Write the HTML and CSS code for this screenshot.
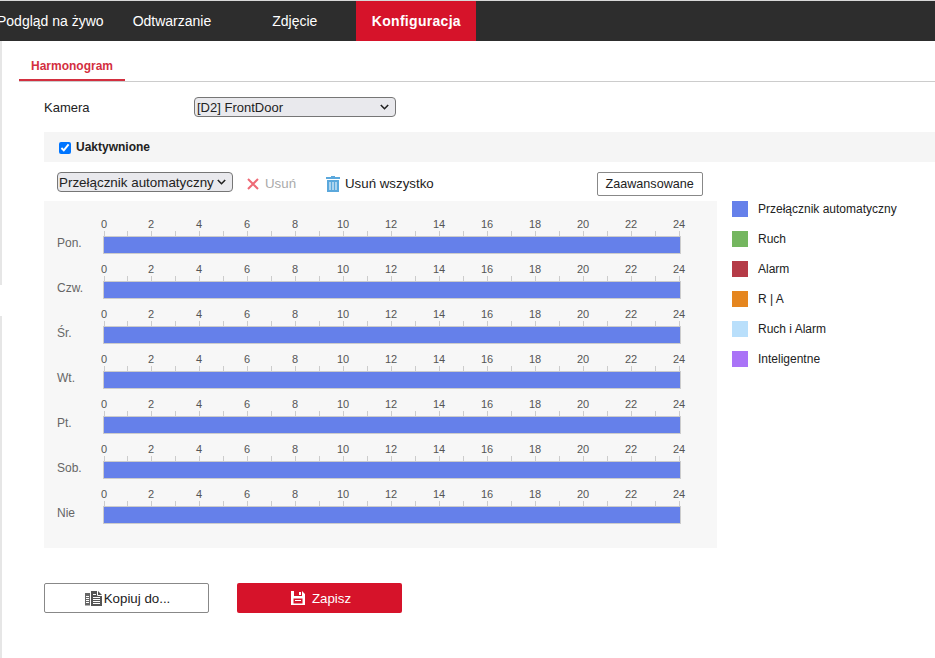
FILE: index.html
```html
<!DOCTYPE html>
<html lang="pl">
<head>
    <meta charset="UTF-8">
    <meta name="viewport" content="width=device-width, initial-scale=1.0">
    <title>Konfiguracja</title>
    <link rel="stylesheet" href="styles.css">
</head>
<body>

<div class="top-nav">
    <a class="nav-item nav-live">Podgląd na żywo</a>
    <a class="nav-item nav-playback">Odtwarzanie</a>
    <a class="nav-item nav-photo">Zdjęcie</a>
    <a class="nav-item nav-config">Konfiguracja</a>
</div>

<div class="page">
    <div class="side-edge">
        <div class="edge-top"></div>
        <div class="edge-bottom"></div>
    </div>

    <div class="content">
        <div class="tabs">
            <span class="tab">Harmonogram</span>
        </div>

        <div class="camera-row">
            <label class="camera-label" for="camera">Kamera</label>
            <select class="camera-select" id="camera">
                <option>[D2] FrontDoor</option>
            </select>
        </div>

        <div class="enable-band">
            <input type="checkbox" id="enabled" checked>
            <label for="enabled">Uaktywnione</label>
        </div>

        <div class="toolbar">
            <select class="type-select">
                <option>Przełącznik automatyczny</option>
            </select>
            <span class="tool tool-remove">
                <svg width="12" height="12" viewBox="0 0 12 12"><path d="M1 1l10 10M11 1L1 11" stroke="#ee6a76" stroke-width="2" fill="none"/></svg>
                Usuń
            </span>
            <span class="tool tool-remove-all">
                <svg width="14" height="16" viewBox="0 0 14 16"><path d="M5 0h4v1h5v2H0V1h5zM1 4h12v12H1zM3.500 6v8h1V6zM6.500 6v8h1V6zM9.500 6v8h1V6z" fill="#5ba8dc" fill-rule="evenodd"/></svg>
                Usuń wszystko
            </span>
            <button class="advanced-btn">Zaawansowane</button>
        </div>

        <div class="schedule-area">
            <div class="schedule-panel">
                <div class="day-row">
                    <div class="day-name">Pon.</div>
                    <div class="day-chart">
                        <div class="hours"><span>0</span><span>2</span><span>4</span><span>6</span><span>8</span><span>10</span><span>12</span><span>14</span><span>16</span><span>18</span><span>20</span><span>22</span><span>24</span></div>
                        <div class="ticks"></div>
                        <div class="bar"></div>
                    </div>
                </div>
                <div class="day-row">
                    <div class="day-name">Czw.</div>
                    <div class="day-chart">
                        <div class="hours"><span>0</span><span>2</span><span>4</span><span>6</span><span>8</span><span>10</span><span>12</span><span>14</span><span>16</span><span>18</span><span>20</span><span>22</span><span>24</span></div>
                        <div class="ticks"></div>
                        <div class="bar"></div>
                    </div>
                </div>
                <div class="day-row">
                    <div class="day-name">Śr.</div>
                    <div class="day-chart">
                        <div class="hours"><span>0</span><span>2</span><span>4</span><span>6</span><span>8</span><span>10</span><span>12</span><span>14</span><span>16</span><span>18</span><span>20</span><span>22</span><span>24</span></div>
                        <div class="ticks"></div>
                        <div class="bar"></div>
                    </div>
                </div>
                <div class="day-row">
                    <div class="day-name">Wt.</div>
                    <div class="day-chart">
                        <div class="hours"><span>0</span><span>2</span><span>4</span><span>6</span><span>8</span><span>10</span><span>12</span><span>14</span><span>16</span><span>18</span><span>20</span><span>22</span><span>24</span></div>
                        <div class="ticks"></div>
                        <div class="bar"></div>
                    </div>
                </div>
                <div class="day-row">
                    <div class="day-name">Pt.</div>
                    <div class="day-chart">
                        <div class="hours"><span>0</span><span>2</span><span>4</span><span>6</span><span>8</span><span>10</span><span>12</span><span>14</span><span>16</span><span>18</span><span>20</span><span>22</span><span>24</span></div>
                        <div class="ticks"></div>
                        <div class="bar"></div>
                    </div>
                </div>
                <div class="day-row">
                    <div class="day-name">Sob.</div>
                    <div class="day-chart">
                        <div class="hours"><span>0</span><span>2</span><span>4</span><span>6</span><span>8</span><span>10</span><span>12</span><span>14</span><span>16</span><span>18</span><span>20</span><span>22</span><span>24</span></div>
                        <div class="ticks"></div>
                        <div class="bar"></div>
                    </div>
                </div>
                <div class="day-row">
                    <div class="day-name">Nie</div>
                    <div class="day-chart">
                        <div class="hours"><span>0</span><span>2</span><span>4</span><span>6</span><span>8</span><span>10</span><span>12</span><span>14</span><span>16</span><span>18</span><span>20</span><span>22</span><span>24</span></div>
                        <div class="ticks"></div>
                        <div class="bar"></div>
                    </div>
                </div>
            </div>

            <div class="legend">
                <div class="legend-item"><span class="swatch swatch-auto"></span>Przełącznik automatyczny</div>
                <div class="legend-item"><span class="swatch swatch-motion"></span>Ruch</div>
                <div class="legend-item"><span class="swatch swatch-alarm"></span>Alarm</div>
                <div class="legend-item"><span class="swatch swatch-or"></span>R | A</div>
                <div class="legend-item"><span class="swatch swatch-and"></span>Ruch i Alarm</div>
                <div class="legend-item"><span class="swatch swatch-smart"></span>Inteligentne</div>
            </div>
        </div>

        <div class="actions">
            <button class="action-btn copy-btn">
                <svg width="17" height="15" viewBox="0 0 17 15"><path d="M0 2h5v12.500H0z" fill="#666"/><path d="M1 5.500h3M1 7.500h3M1 9.500h3M1 11.500h3" stroke="#fff" fill="none"/><path d="M6 0h7l4 4v11H6z" fill="#555"/><path d="M12.500 0v4.500H17" stroke="#fff" fill="none"/><path d="M8 3.500h3M8 6.500h7M8 8.500h7M8 10.500h7M8 12.500h7" stroke="#fff" fill="none"/></svg>
                Kopiuj do...
            </button>
            <button class="action-btn save-btn">
                <svg width="14" height="14" viewBox="0 0 14 14"><path d="M0 0h11l3 3v11H0zM3 0v5h8V0zM8 1v3h2V1zM2.500 7.500v5h9v-5zM4 9h6v1H4z" fill="#fff" fill-rule="evenodd"/></svg>
                Zapisz
            </button>
        </div>
    </div>
</div>

</body>
</html>
```

FILE: styles.css
```css
body {
    font-family: "Liberation Sans", Arial, sans-serif;
    font-size: 12px;
    background-color: #ffffff;
    color: #222;
    margin: 0;
    height: 658px;
    overflow: hidden;
}
.top-nav {
    display: flex;
    height: 40px;
    border-top: 1px solid #d8d8d8;
    background-color: #2d2d2d;
    color: #ffffff;
    font-size: 14px;
    line-height: 40px;
}
.nav-item {
    display: block;
    white-space: nowrap;
}
.nav-live {
    margin-left: -3px;
}
.nav-playback {
    margin-left: 29px;
}
.nav-photo {
    margin-left: 61px;
}
.nav-config {
    margin-left: 39px;
    width: 120px;
    text-align: center;
    font-weight: bold;
    letter-spacing: 0.3px;
    background-color: #d6132a;
}
.page {
    display: flex;
    height: 617px;
}
.side-edge {
    width: 2px;
    display: flex;
    flex-direction: column;
}
.edge-top {
    height: 244px;
    background-color: #e6e6e6;
}
.edge-bottom {
    flex: 1;
    margin-top: 31px;
    background-color: #e6e6e6;
}
.content {
    flex: 1;
    min-width: 0;
    padding-left: 17px;
}
.tabs {
    height: 40px;
    border-bottom: 1px solid #cccccc;
}
.tab {
    display: inline-block;
    height: 38px;
    line-height: 50px;
    padding: 0 12px;
    color: #d32f3f;
    font-weight: bold;
    border-bottom: 2px solid #d32f3f;
}
.camera-row {
    display: flex;
    align-items: center;
    margin: 15px 0 0 25px;
    font-size: 13px;
}
.camera-label {
    width: 150px;
}
.camera-select,
.type-select {
    appearance: none;
    height: 20px;
    padding: 0 0 0 2px;
    border: 1px solid #767676;
    border-radius: 4px;
    color: #222;
    font-family: inherit;
    background-color: #e9e9ed;
    background-image: url("data:image/svg+xml,%3Csvg xmlns='http://www.w3.org/2000/svg' width='9' height='6'%3E%3Cpath d='M.8 1l3.700 3.700L8.200 1' fill='none' stroke='%23222' stroke-width='1.600'/%3E%3C/svg%3E");
    background-repeat: no-repeat;
    background-position: right 6px center;
}
.camera-select {
    width: 202px;
    font-size: 13px;
}
.enable-band {
    display: flex;
    align-items: center;
    height: 30px;
    margin: 15px 0 0 25px;
    padding-left: 15px;
    background-color: #f5f5f5;
    font-weight: bold;
}
.enable-band input {
    width: 12px;
    height: 12px;
    margin: 1px 5px 0 0;
}
.toolbar {
    display: flex;
    align-items: flex-start;
    height: 39px;
    margin-left: 38px;
    padding-top: 10px;
    box-sizing: border-box;
    font-size: 13.3px;
}
.type-select {
    width: 176px;
    padding-left: 1px;
    font-size: 13.4px;
}
.tool {
    display: flex;
    align-items: center;
    gap: 6px;
    height: 23px;
}
.tool-remove {
    margin-left: 14px;
    width: 79px;
    color: #aaaaaa;
}
.tool-remove-all {
    gap: 5px;
    color: #222;
}
.advanced-btn {
    margin-left: 163px;
    width: 106px;
    height: 24px;
    padding: 0;
    border: 1px solid #888888;
    border-radius: 2px;
    background-color: #ffffff;
    color: #222;
    font-family: inherit;
    font-size: 12.6px;
}
.schedule-area {
    display: flex;
    margin-left: 25px;
}
.schedule-panel {
    width: 660px;
    height: 333px;
    padding: 14px 0 0 13px;
    background-color: #f7f7f7;
}
.day-row {
    display: flex;
    height: 45px;
}
.day-name {
    width: 46px;
    padding-top: 21px;
    color: #666;
}
.day-chart {
    width: 578px;
}
.hours {
    display: flex;
    height: 16px;
    margin-left: -24px;
    font-size: 11px;
    line-height: 19px;
    color: #555;
}
.hours span {
    width: 48px;
    flex: none;
    text-align: center;
}
.hours span:first-child {
    margin: 0 -1px 0 1px;
}
.ticks {
    width: 576px;
    height: 5px;
    margin-left: 1px;
    background:
        linear-gradient(#cccccc, #cccccc) 0 0 / 1px 100% no-repeat,
        repeating-linear-gradient(90deg, transparent 0 23px, #cccccc 23px 24px);
}
.bar {
    height: 16px;
    border: 1px solid #cccccc;
    background-color: #6580ea;
}
.legend {
    margin-left: 15px;
}
.legend-item {
    display: flex;
    align-items: center;
    height: 16px;
    margin-bottom: 14px;
    white-space: nowrap;
}
.swatch {
    width: 16px;
    height: 16px;
    margin-right: 10px;
}
.swatch-auto {
    background-color: #6580ea;
}
.swatch-motion {
    background-color: #74b65f;
}
.swatch-alarm {
    background-color: #b53b47;
}
.swatch-or {
    background-color: #e5861f;
}
.swatch-and {
    background-color: #b9dffb;
}
.swatch-smart {
    background-color: #aa73f7;
}
.actions {
    display: flex;
    gap: 28px;
    margin: 35px 0 0 25px;
}
.action-btn {
    display: flex;
    align-items: center;
    justify-content: center;
    width: 165px;
    height: 30px;
    border-radius: 2px;
    font-family: inherit;
    font-size: 13.3px;
}
.copy-btn {
    gap: 2px;
    padding: 0 0 0 2px;
    border: 1px solid #888888;
    background-color: #ffffff;
    color: #222;
}
.save-btn {
    gap: 7px;
    padding: 0 0 0 3px;
    border: none;
    background-color: #d6132a;
    color: #ffffff;
}
```
